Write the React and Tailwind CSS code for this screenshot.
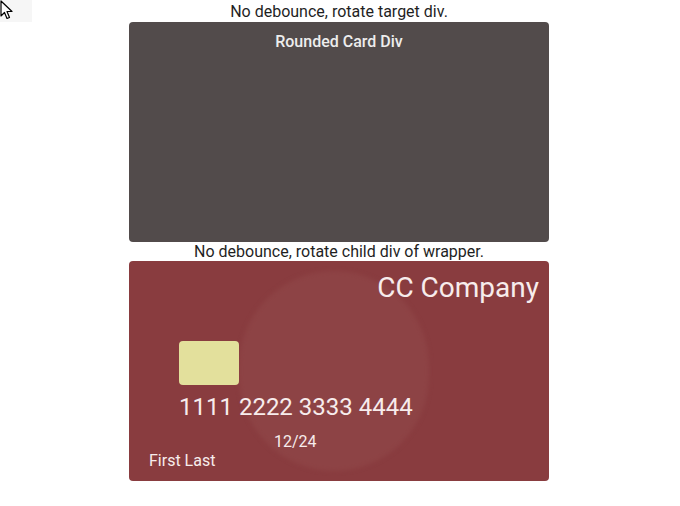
export default function App() {
  return (
    <div className="relative w-[680px] h-[506px] bg-white overflow-hidden" style={{ fontFamily: 'Roboto, "Liberation Sans", sans-serif' }}>
      <div className="absolute left-0 top-0 w-[32px] h-[22px] bg-[#f6f6f6]" />
      <svg className="absolute left-0 top-0" width="14" height="22" viewBox="0 0 14 22">
        <path d="M1 1 L1 16 L4.5 12.5 L7 18.5 L9.5 17.5 L7 11.5 L12 11.5 Z" fill="white" stroke="black" strokeWidth="1.2" strokeLinejoin="round" />
      </svg>
      <div className="flex flex-col items-center pr-[2px]">
        <div className="text-[16px] text-[#1f1f1f] leading-[18.7px] pt-[3px]">No debounce, rotate target div.</div>
        <div className="w-[420px] h-[220px] rounded-[4px] bg-[#524b4b] flex flex-col items-center">
          <div className="mt-[11px] text-[16px] font-medium leading-[18.7px] text-[#ededed]">Rounded Card Div</div>
        </div>
        <div className="text-[16px] text-[#1f1f1f] leading-[19px]">No debounce, rotate child div of wrapper.</div>
        <div className="relative w-[420px] h-[220px] rounded-[4px] bg-[#893c3f] overflow-hidden flex flex-col text-[#f7ecec]">
          <div className="absolute left-[110px] top-[10px] w-[190px] h-[200px] rounded-full bg-[#8d4345] blur-[2px]" />
          <div className="relative flex flex-col">
            <div className="mt-[11px] pr-[10px] text-right text-[28px] leading-[32.8px]">CC Company</div>
            <div className="mt-[36px] ml-[50px] w-[60px] h-[44px] rounded-[4px] bg-[#e3e09c]" />
            <div className="mt-[8px] ml-[50px] text-[24px] leading-[28px]">1111 2222 3333 4444</div>
            <div className="mt-[12px] ml-[145px] text-[16px] leading-[18.7px]">12/24</div>
            <div className="mt-[1px] ml-[20px] text-[16px] leading-[18.7px]">First Last</div>
          </div>
        </div>
      </div>
    </div>
  );
}
